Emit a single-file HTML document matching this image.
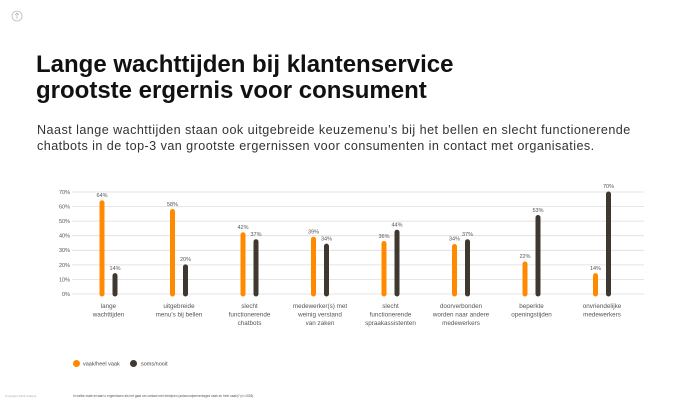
<!DOCTYPE html>
<html><head><meta charset="utf-8"><style>
body{margin:0;width:688px;height:401px;background:#fff;font-family:"Liberation Sans",sans-serif;overflow:hidden;position:relative}
h1{position:absolute;left:36px;top:52px;margin:0;font-size:24px;line-height:26px;font-weight:bold;color:#111;letter-spacing:0}
p{position:absolute;left:37px;top:122px;margin:0;font-size:12.6px;line-height:16px;color:#333;width:612px;letter-spacing:0.45px}
</style></head><body>
<svg width="688" height="401" style="position:absolute;left:0;top:0" font-family="Liberation Sans, sans-serif">
<circle cx="17" cy="16" r="5" fill="none" stroke="#bbb" stroke-width="0.8"/>
<path d="M17 19V13M15 15L17 13L19 15" stroke="#bbb" stroke-width="0.8" fill="none"/>
<g stroke="#ddd" stroke-width="0.8">
<line x1="72" y1="192" x2="644" y2="192"/><line x1="72" y1="206.6" x2="644" y2="206.6"/>
<line x1="72" y1="221.1" x2="644" y2="221.1"/><line x1="72" y1="235.7" x2="644" y2="235.7"/>
<line x1="72" y1="250.3" x2="644" y2="250.3"/><line x1="72" y1="264.9" x2="644" y2="264.9"/>
<line x1="72" y1="279.4" x2="644" y2="279.4"/><line x1="72" y1="294" x2="644" y2="294"/>
</g>
<g font-size="5.5" fill="#555" text-anchor="end">
<text x="70" y="194">70%</text><text x="70" y="208.5">60%</text><text x="70" y="223">50%</text>
<text x="70" y="237.6">40%</text><text x="70" y="252.2">30%</text><text x="70" y="266.8">20%</text>
<text x="70" y="281.3">10%</text><text x="70" y="296">0%</text>
</g>
<g stroke-linecap="round" stroke-width="5">
<g stroke="#ff8a00">
<line x1="102" y1="294" x2="102" y2="202.8"/><line x1="172.5" y1="294" x2="172.5" y2="211.5"/>
<line x1="243" y1="294" x2="243" y2="234.8"/><line x1="313.5" y1="294" x2="313.5" y2="239.2"/>
<line x1="384" y1="294" x2="384" y2="243.5"/><line x1="454.5" y1="294" x2="454.5" y2="246.5"/>
<line x1="525" y1="294" x2="525" y2="264"/><line x1="595.5" y1="294" x2="595.5" y2="275.6"/>
</g>
<g stroke="#3f3831">
<line x1="115" y1="294" x2="115" y2="275.6"/><line x1="185.5" y1="294" x2="185.5" y2="266.9"/>
<line x1="256" y1="294" x2="256" y2="241.7"/><line x1="326.5" y1="294" x2="326.5" y2="246.1"/>
<line x1="397" y1="294" x2="397" y2="232.2"/><line x1="467.5" y1="294" x2="467.5" y2="241.7"/>
<line x1="538" y1="294" x2="538" y2="217.5"/><line x1="608.5" y1="294" x2="608.5" y2="194"/>
</g></g>
<g font-size="5.5" fill="#555" text-anchor="middle">
<text x="102" y="197">64%</text><text x="115" y="270">14%</text>
<text x="172.5" y="206">58%</text><text x="185.5" y="261">20%</text>
<text x="243" y="229">42%</text><text x="256" y="236">37%</text>
<text x="313.5" y="233.5">39%</text><text x="326.5" y="240.5">34%</text>
<text x="384" y="238">36%</text><text x="397" y="226.5">44%</text>
<text x="454.5" y="240.5">34%</text><text x="467.5" y="236">37%</text>
<text x="525" y="258">22%</text><text x="538" y="212">53%</text>
<text x="595.5" y="270">14%</text><text x="608.5" y="188">70%</text>
</g>
<g font-size="6.3" fill="#555" text-anchor="middle">
<text x="108.5" y="308">lange</text><text x="108.5" y="316.5">wachttijden</text>
<text x="179" y="308">uitgebreide</text><text x="179" y="316.5">menu's bij bellen</text>
<text x="249.5" y="308">slecht</text><text x="249.5" y="316.5">functionerende</text><text x="249.5" y="325">chatbots</text>
<text x="320" y="308">medewerker(s) met</text><text x="320" y="316.5">weinig verstand</text><text x="320" y="325">van zaken</text>
<text x="390.5" y="308">slecht</text><text x="390.5" y="316.5">functionerende</text><text x="390.5" y="325">spraakassistenten</text>
<text x="461" y="308">doorverbonden</text><text x="461" y="316.5">worden naar andere</text><text x="461" y="325">medewerkers</text>
<text x="531.5" y="308">beperkte</text><text x="531.5" y="316.5">openingstijden</text>
<text x="602" y="308">onvriendelijke</text><text x="602" y="316.5">medewerkers</text>
</g>
<circle cx="76.5" cy="363.5" r="3.5" fill="#ff8a00"/>
<text x="83" y="365.5" font-size="5.5" fill="#444">vaak/heel vaak</text>
<circle cx="133.5" cy="363.5" r="3.5" fill="#3f3831"/>
<text x="141" y="365.5" font-size="5.5" fill="#444">soms/nooit</text>
<text x="5" y="397" font-size="3" fill="#aaa">Copyright 2023 Calspot</text>
<text x="73" y="397" font-size="3.2" fill="#555">In welke mate ervaart u ergernissen als het gaat om contact met bedrijven (antwoordpercentages vaak en heel vaak)? (n=1028)</text>
</svg>
<h1>Lange wachttijden bij klantenservice<br>grootste ergernis voor consument</h1>
<p>Naast lange wachttijden staan ook uitgebreide keuzemenu’s bij het bellen en slecht functionerende chatbots in de top-3 van grootste ergernissen voor consumenten in contact met organisaties.</p>
</body></html>
